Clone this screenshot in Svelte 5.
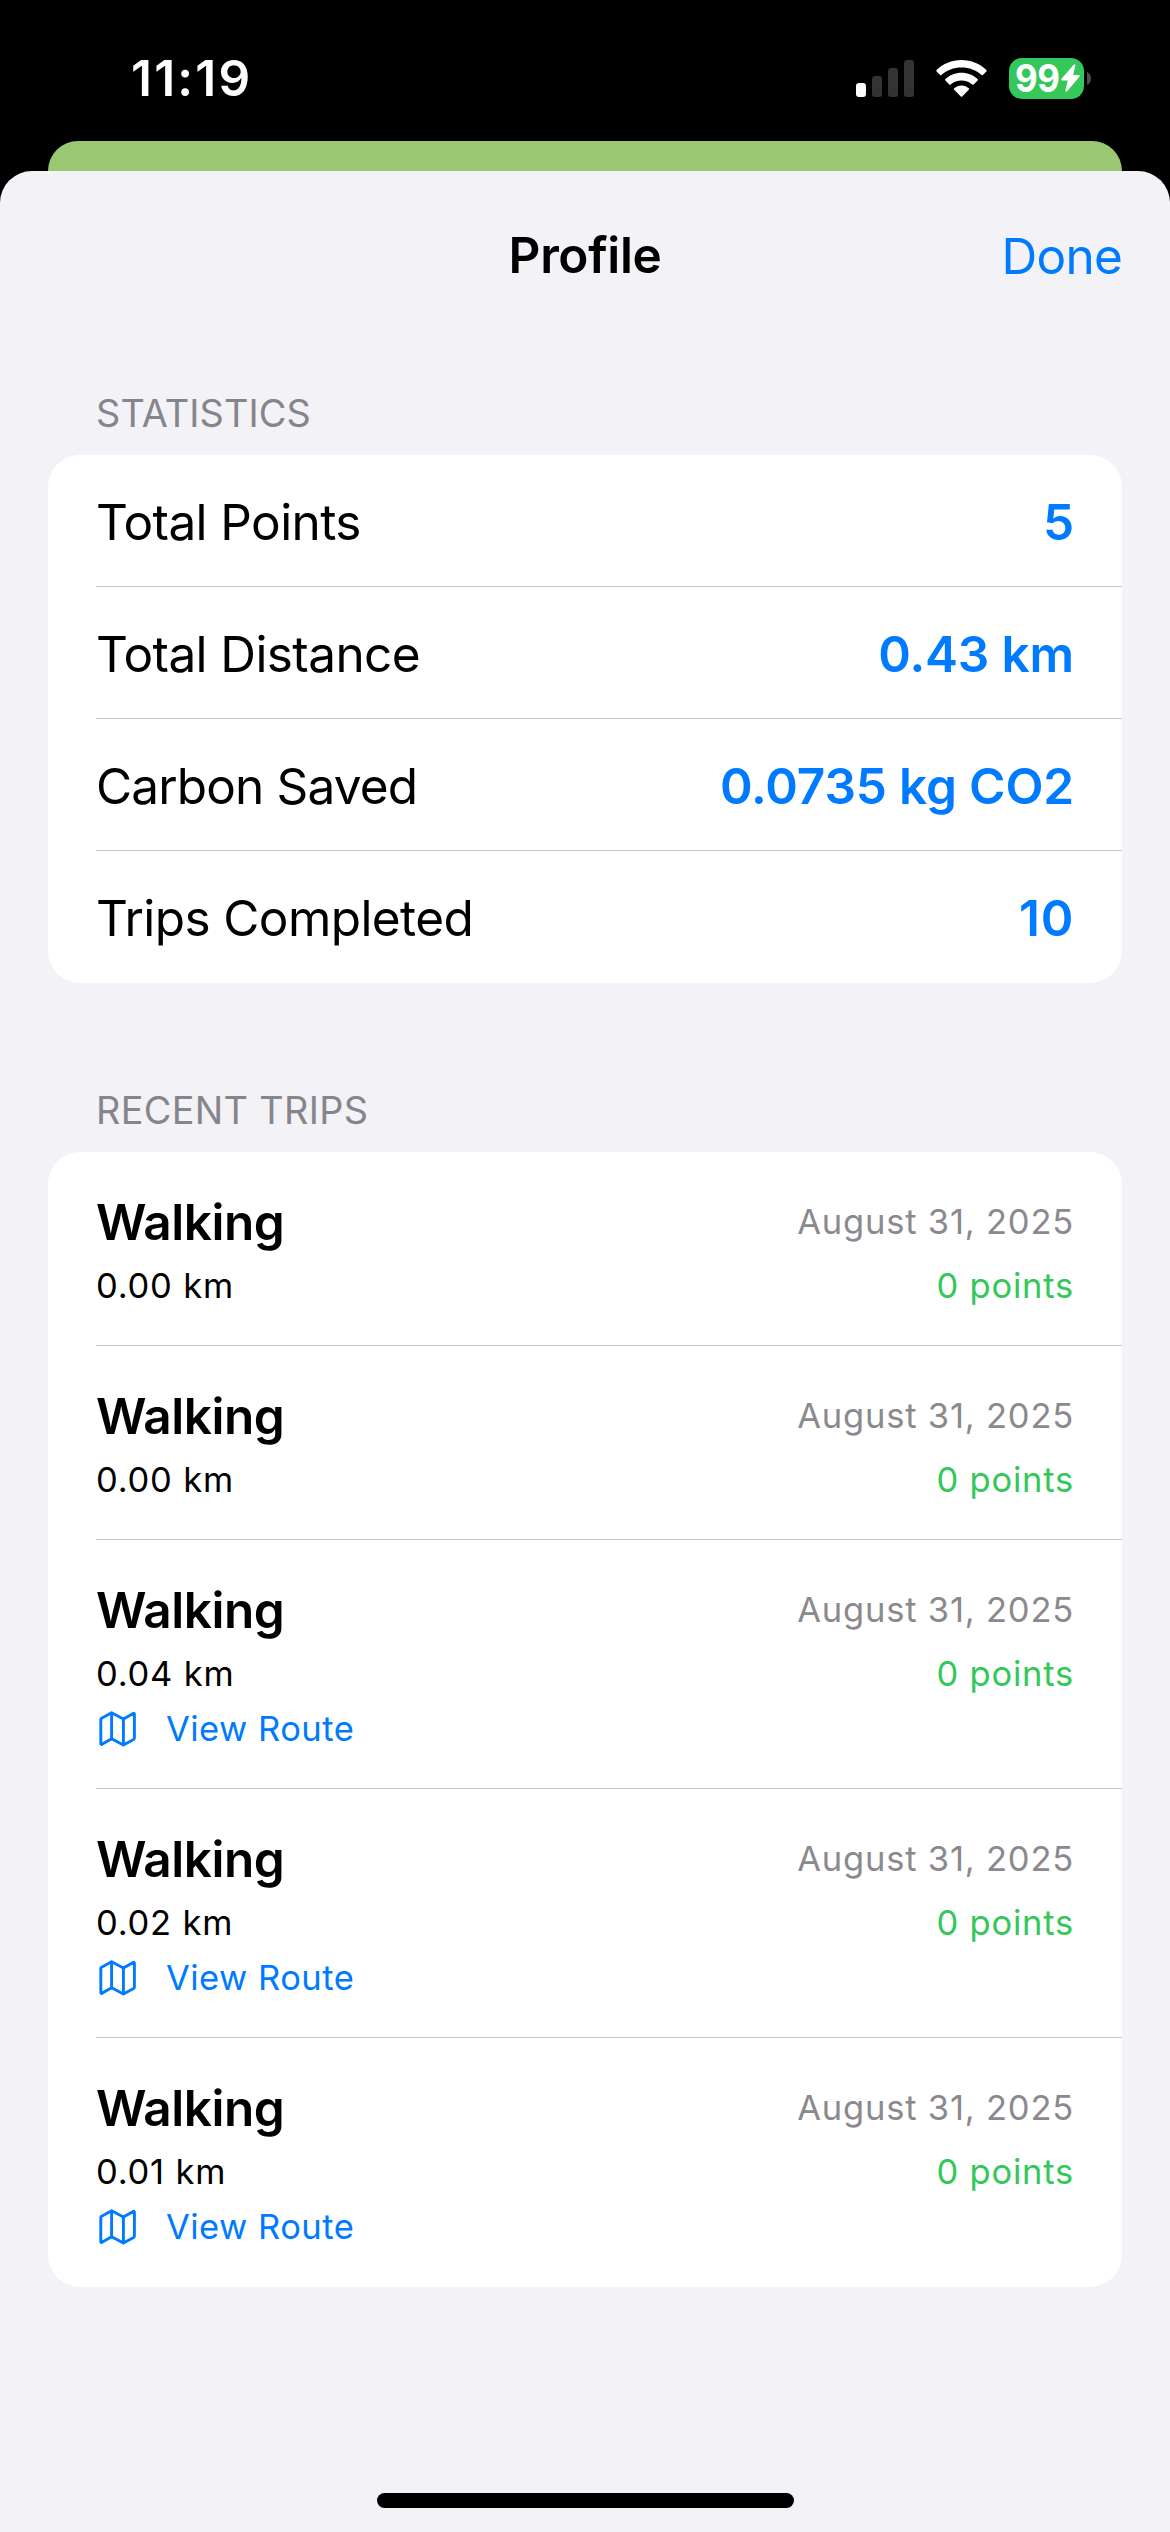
<script>
  const stats = [
    { label: 'Total Points', value: '5' },
    { label: 'Total Distance', value: '0.43 km' },
    { label: 'Carbon Saved', value: '0.0735 kg CO2', tight: true },
    { label: 'Trips Completed', value: '10', spaced: true }
  ];

  const trips = [
    { mode: 'Walking', date: 'August 31, 2025', distance: '0.00 km', points: '0 points', route: false },
    { mode: 'Walking', date: 'August 31, 2025', distance: '0.00 km', points: '0 points', route: false },
    { mode: 'Walking', date: 'August 31, 2025', distance: '0.04 km', points: '0 points', route: true },
    { mode: 'Walking', date: 'August 31, 2025', distance: '0.02 km', points: '0 points', route: true },
    { mode: 'Walking', date: 'August 31, 2025', distance: '0.01 km', points: '0 points', route: true }
  ];
</script>

<div class="screen">
  <div class="status">
    <span class="time">11:19</span>
    <div class="indicators">
      <svg class="signal" width="58" height="37" viewBox="0 0 58 37">
        <rect x="0" y="23" width="10" height="14" rx="3" fill="#fff" />
        <rect x="16" y="16" width="10" height="21" rx="3" fill="#333" />
        <rect x="32" y="8" width="10" height="29" rx="3" fill="#333" />
        <rect x="48" y="0" width="10" height="37" rx="3" fill="#333" />
      </svg>
      <svg class="wifi" width="51" height="37" viewBox="0 0 51 37" fill="#fff">
        <path d="M25.5 0C35.2 0 44 3.8 50.4 10Q51 10.7 50.4 11.4L46.9 15Q46.2 15.6 45.5 15C40.3 10.2 33.2 7.6 25.5 7.6S10.7 10.2 5.5 15Q4.8 15.6 4.1 15L.6 11.4Q0 10.7 .6 10C7 3.8 15.8 0 25.5 0Z" />
        <path d="M25.5 12.8C31.8 12.8 37.4 15.2 41.6 19.1Q42.3 19.8 41.6 20.5L37.7 24.4Q37 25 36.3 24.4C33.4 21.8 29.6 20.4 25.5 20.4S17.6 21.8 14.7 24.4Q14 25 13.3 24.4L9.4 20.5Q8.7 19.8 9.4 19.1C13.6 15.2 19.2 12.8 25.5 12.8Z" />
        <path d="M25.5 25.4C28.3 25.4 30.8 26.5 32.8 28.3Q33.5 29 32.8 29.7L26.2 36.4Q25.5 37 24.8 36.4L18.2 29.7Q17.5 29 18.2 28.3C20.2 26.5 22.7 25.4 25.5 25.4Z" />
      </svg>
      <div class="battery">
        <div class="cell">
          <span class="level">99</span>
          <svg class="bolt" width="19" height="28" viewBox="0 0 19 28">
            <path d="M13.4 1.4 L1.3 15.4 H8 L5.4 26.6 L17.6 12 H10.8 Z" fill="#fff" stroke="#fff" stroke-width="2" stroke-linejoin="round" />
          </svg>
        </div>
        <svg width="4" height="13" viewBox="0 0 4 13"><path d="M0 0C2.4 1 4 3.5 4 6.5S2.4 12 0 13Z" fill="#4d4d4d" /></svg>
      </div>
    </div>
  </div>

  <div class="behind"></div>

  <main class="sheet">
    <header class="nav">
      <h1>Profile</h1>
      <span class="done">Done</span>
    </header>

    <h2 class="stats-title">STATISTICS</h2>
    <section class="card">
      {#each stats as s}
        <div class="stat">
          <span class="label" class:tight={s.tight}>{s.label}</span>
          <span class="value" class:spaced={s.spaced}>{s.value}</span>
        </div>
      {/each}
    </section>

    <h2 class="trips-title">RECENT TRIPS</h2>
    <section class="card">
      {#each trips as t}
        <div class="trip">
          <div class="line head">
            <span class="mode">{t.mode}</span>
            <span class="date">{t.date}</span>
          </div>
          <div class="line detail">
            <span>{t.distance}</span>
            <span class="points">{t.points}</span>
          </div>
          {#if t.route}
            <div class="route">
              <svg width="38" height="36" viewBox="0 0 38 36" fill="none" stroke="#007aff" stroke-width="2.9" stroke-linejoin="round" stroke-linecap="round">
                <path d="M1.8 8.6Q1.8 7.7 2.6 7.2L12.6 1.8L24.4 8L34.2 2.4Q35.4 1.9 35.4 3.2V27Q35.4 28 34.6 28.5L24.4 34L12.6 27.8L3 33.3Q1.8 33.8 1.8 32.5Z" />
                <path d="M12.6 2.2V27.6M24.4 8.2V33.8" />
              </svg>
              <span>View Route</span>
            </div>
          {/if}
        </div>
      {/each}
    </section>

    <div class="home"></div>
  </main>
</div>

<style>
  :global(body) {
    margin: 0;
    background: #000;
  }

  .screen {
    box-sizing: border-box;
    width: 1170px;
    height: 2532px;
    display: flex;
    flex-direction: column;
    background: #000;
    color: #000;
    font-family: Inter, 'Liberation Sans', sans-serif;
    overflow: hidden;
  }

  .status {
    box-sizing: border-box;
    height: 141px;
    flex: none;
    display: flex;
    justify-content: space-between;
    align-items: flex-start;
    padding: 48px 79px 0 131px;
  }

  .time {
    color: #fff;
    font-size: 49.5px;
    line-height: 60px;
    font-weight: 600;
    letter-spacing: 2.2px;
  }

  .indicators {
    display: flex;
    align-items: center;
    height: 60px;
  }

  .signal {
    margin-right: 22px;
  }

  .wifi {
    margin-right: 22px;
  }

  .battery {
    display: flex;
    align-items: center;
    gap: 3px;
  }

  .cell {
    box-sizing: border-box;
    width: 75px;
    height: 41px;
    padding-left: 6px;
    border-radius: 13px;
    background: #34c759;
    display: flex;
    align-items: center;
  }

  .level {
    width: 46px;
    color: #fff;
    font-size: 38px;
    line-height: 41px;
    font-weight: 700;
    letter-spacing: -0.5px;
    transform: scaleX(0.92);
    transform-origin: 0 50%;
  }

  .behind {
    flex: none;
    height: 30px;
    margin: 0 48px;
    border-radius: 30px 30px 0 0;
    background: #9ac872;
  }

  .sheet {
    flex: 1;
    display: flex;
    flex-direction: column;
    padding: 0 48px;
    border-radius: 32px 32px 0 0;
    background: #f2f2f7;
  }

  .nav {
    display: grid;
    grid-template-columns: 1fr auto 1fr;
    height: 168px;
    align-items: center;
  }

  h1 {
    grid-column: 2;
    margin: 0;
    font-size: 49.5px;
    line-height: 60px;
    font-weight: 600;
    letter-spacing: -0.35px;
  }

  .done {
    justify-self: end;
    padding-top: 2px;
    color: #007aff;
    font-size: 49.5px;
    line-height: 60px;
    letter-spacing: -0.78px;
  }

  h2 {
    margin: 0 48px;
    color: #85858b;
    font-size: 37.8px;
    line-height: 48px;
    font-weight: 400;
  }

  .stats-title {
    margin-top: 50px;
    margin-bottom: 18px;
    letter-spacing: 0.15px;
  }

  .trips-title {
    margin-top: 103px;
    margin-bottom: 18px;
    letter-spacing: 0.35px;
  }

  .card {
    border-radius: 32px;
    background: #fff;
    overflow: hidden;
  }

  .stat {
    box-sizing: border-box;
    height: 132px;
    margin-left: 48px;
    padding: 3px 48px 0 0;
    display: flex;
    justify-content: space-between;
    align-items: center;
    border-bottom: 1px solid #c6c6c8;
    font-size: 49.5px;
    line-height: 60px;
  }

  .stat:last-child,
  .trip:last-child {
    border-bottom-color: transparent;
  }

  .label {
    letter-spacing: -0.6px;
  }

  .tight {
    letter-spacing: -0.85px;
  }

  .value {
    color: #007aff;
    font-weight: 600;
    letter-spacing: -0.15px;
  }

  .spaced {
    letter-spacing: 0.7px;
  }

  .trip {
    margin-left: 48px;
    padding: 40px 48px 35px 0;
    border-bottom: 1px solid #c6c6c8;
    font-size: 34.5px;
    line-height: 46px;
    letter-spacing: 0.8px;
  }

  .line {
    display: flex;
    justify-content: space-between;
  }

  .head {
    height: 60px;
    align-items: center;
    margin-bottom: 9px;
  }

  .mode {
    font-size: 49.5px;
    line-height: 60px;
    font-weight: 600;
    letter-spacing: -0.45px;
  }

  .date {
    color: #8a8a8e;
  }

  .detail {
    height: 49px;
    align-items: center;
  }

  .points {
    color: #34c759;
  }

  .route {
    box-sizing: border-box;
    display: flex;
    align-items: center;
    gap: 29px;
    height: 55px;
    padding: 6px 0 0 3px;
    color: #007aff;
    letter-spacing: 0.48px;
  }

  .home {
    width: 417px;
    height: 15px;
    margin: auto auto 24px;
    border-radius: 8px;
    background: #000;
  }
</style>
